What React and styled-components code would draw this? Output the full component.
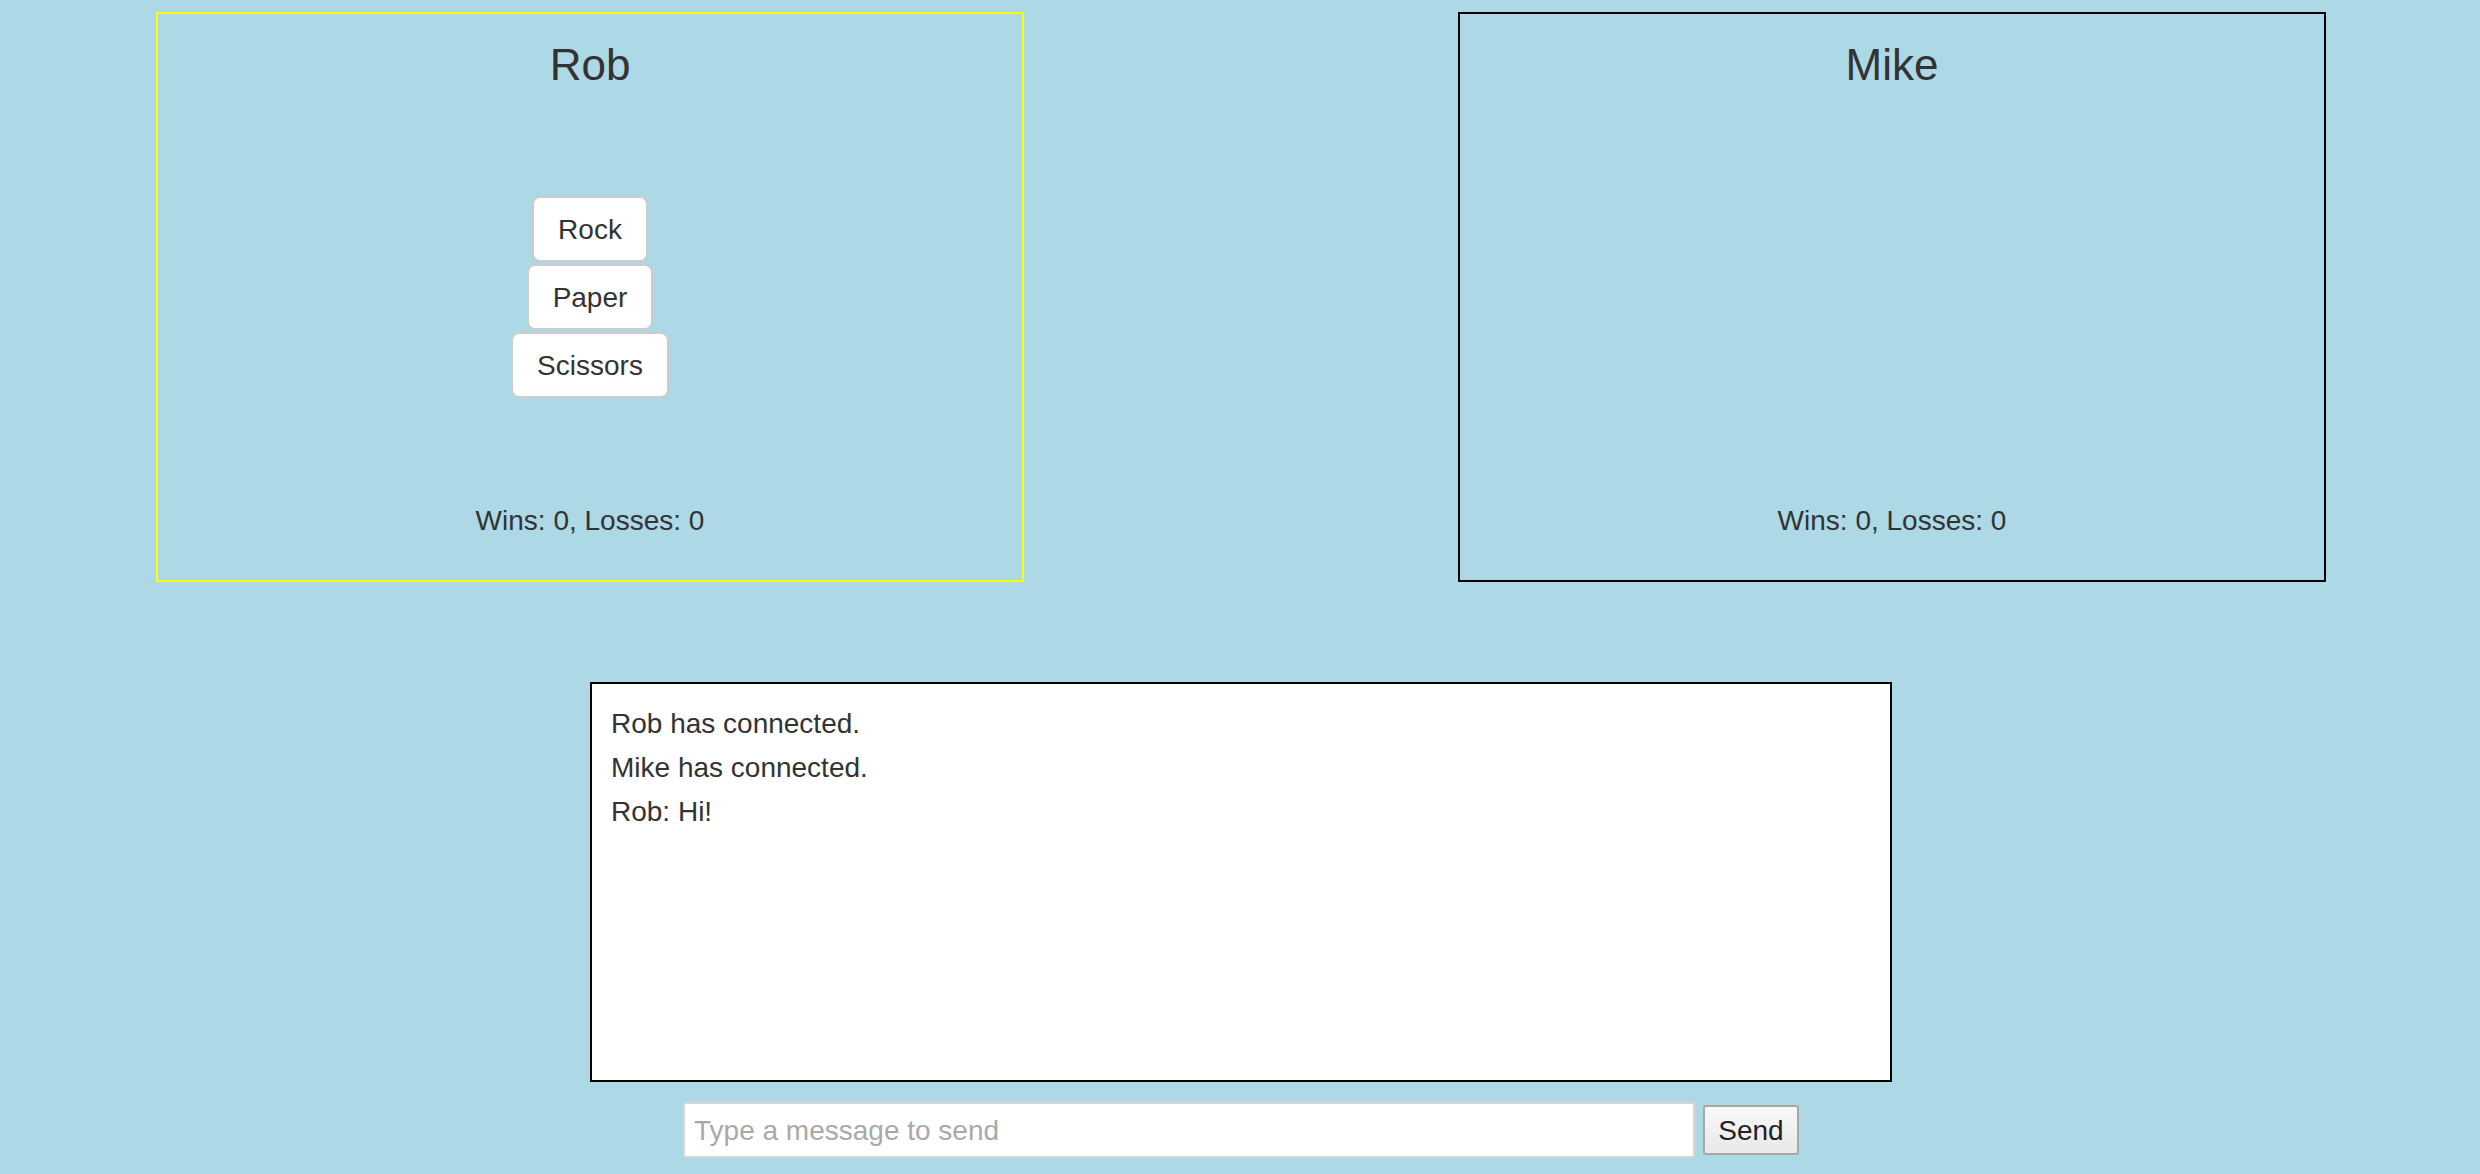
import React from 'react';
import styled, { createGlobalStyle } from 'styled-components';

const GlobalStyle = createGlobalStyle`
  html, body {
    margin: 0;
    padding: 0;
    background: #add8e6;
  }
  body {
    font-family: "Liberation Sans", Arial, Helvetica, sans-serif;
    color: #333;
  }
`;

const Page = styled.div`
  min-height: 1174px;
  padding: 12px 0 0 2px;
  box-sizing: border-box;
  display: flex;
  flex-direction: column;
  align-items: center;
`;

const Players = styled.div`
  display: flex;
  justify-content: center;
  gap: 434px;
`;

const PlayerPanel = styled.div`
  width: 868px;
  height: 570px;
  box-sizing: border-box;
  border: 2px solid ${(p) => (p.$active ? '#ffff00' : '#000')};
  display: grid;
  grid-template-rows: 1fr auto 1fr;
  justify-items: center;
`;

const PlayerName = styled.div`
  align-self: start;
  margin-top: 27px;
  font-size: 44px;
  line-height: 48px;
`;

const Choices = styled.div`
  display: flex;
  flex-direction: column;
  align-items: center;
  gap: 2px;
`;

const ChoiceButton = styled.button`
  font-family: inherit;
  font-size: 28px;
  line-height: 40px;
  color: #333;
  background: #fff;
  border: 2px solid #ccc;
  border-radius: 8px;
  padding: 12px 24px 10px;
  cursor: pointer;
`;

const Score = styled.div`
  align-self: end;
  margin-bottom: 39px;
  font-size: 28px;
  line-height: 40px;
`;

const ChatLog = styled.div`
  margin-top: 100px;
  width: 1302px;
  height: 400px;
  box-sizing: border-box;
  border: 2px solid #000;
  background: #fff;
  padding: 18px 19px;
  overflow: auto;
`;

const Message = styled.div`
  font-size: 28px;
  line-height: 44px;
  color: #333;
`;

const SendRow = styled.form`
  margin-top: 20px;
  display: flex;
  align-items: center;
  gap: 8px;
`;

const MessageInput = styled.input`
  width: 1012px;
  height: 56px;
  box-sizing: border-box;
  border: 2px solid #d6d6d6;
  background: #fff;
  padding: 2px 9px 0;
  font-family: inherit;
  font-size: 28px;
  color: #333;
  outline: none;
  &::placeholder {
    color: #a9a9a9;
  }
`;

const SendButton = styled.button`
  width: 96px;
  height: 50px;
  box-sizing: border-box;
  border: 2px solid #a8a8a8;
  border-radius: 3px;
  background: linear-gradient(#f9f9f9, #e8e8e8);
  font-family: inherit;
  font-size: 28px;
  color: #222;
  padding: 2px 0 0;
`;

const players = [
  { name: 'Rob', wins: 0, losses: 0, active: true },
  { name: 'Mike', wins: 0, losses: 0, active: false },
];

const messages = ['Rob has connected.', 'Mike has connected.', 'Rob: Hi!'];

export default function App() {
  return (
    <>
      <GlobalStyle />
      <Page>
        <Players>
          {players.map((p) => (
            <PlayerPanel key={p.name} $active={p.active}>
              <PlayerName>{p.name}</PlayerName>
              <Choices>
                {p.active &&
                  ['Rock', 'Paper', 'Scissors'].map((c) => (
                    <ChoiceButton key={c} type="button">{c}</ChoiceButton>
                  ))}
              </Choices>
              <Score>Wins: {p.wins}, Losses: {p.losses}</Score>
            </PlayerPanel>
          ))}
        </Players>
        <ChatLog>
          {messages.map((m, i) => (
            <Message key={i}>{m}</Message>
          ))}
        </ChatLog>
        <SendRow onSubmit={(e) => e.preventDefault()}>
          <MessageInput type="text" placeholder="Type a message to send" />
          <SendButton type="submit">Send</SendButton>
        </SendRow>
      </Page>
    </>
  );
}
